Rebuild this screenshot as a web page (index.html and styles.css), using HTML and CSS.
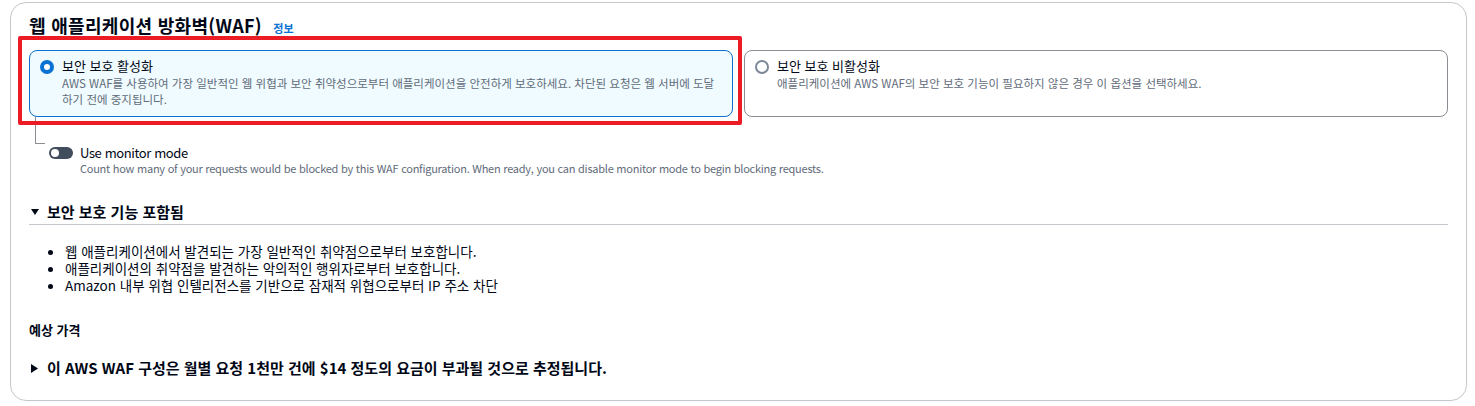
FILE: index.html
```html
<!DOCTYPE html>
<html lang="ko">
<head>
    <meta charset="UTF-8">
    <meta name="viewport" content="width=device-width, initial-scale=1.0">
    <title>웹 애플리케이션 방화벽(WAF)</title>
    <link rel="stylesheet" href="styles.css">
</head>
<body>

<div class="panel">
    <h2 class="panel-title">웹 애플리케이션 방화벽(WAF) <a class="info-link" href="#">정보</a></h2>

    <!-- Protection choice tiles -->
    <div class="tiles">
        <div class="tile selected">
            <span class="radio checked"></span>
            <div>
                <div class="tile-label">보안 보호 활성화</div>
                <div class="tile-desc">AWS WAF를 사용하여 가장 일반적인 웹 위협과 보안 취약성으로부터 애플리케이션을 안전하게 보호하세요. 차단된 요청은 웹 서버에 도달하기 전에 중지됩니다.</div>
            </div>
        </div>
        <div class="tile">
            <span class="radio"></span>
            <div>
                <div class="tile-label">보안 보호 비활성화</div>
                <div class="tile-desc">애플리케이션에 AWS WAF의 보안 보호 기능이 필요하지 않은 경우 이 옵션을 선택하세요.</div>
            </div>
        </div>
    </div>

    <!-- Monitor mode toggle -->
    <div class="branch"></div>
    <div class="monitor">
        <span class="toggle"><span class="knob"></span></span>
        <div>
            <div class="monitor-label">Use monitor mode</div>
            <div class="monitor-desc">Count how many of your requests would be blocked by this WAF configuration. When ready, you can disable monitor mode to begin blocking requests.</div>
        </div>
    </div>

    <!-- Included protections -->
    <div class="expander">
        <svg class="caret" width="8" height="6" viewBox="0 0 8 6"><path d="M0 0H8L4 6Z" fill="#000716"/></svg>
        보안 보호 기능 포함됨
    </div>
    <ul class="features">
        <li>웹 애플리케이션에서 발견되는 가장 일반적인 취약점으로부터 보호합니다.</li>
        <li>애플리케이션의 취약점을 발견하는 악의적인 행위자로부터 보호합니다.</li>
        <li>Amazon 내부 위협 인텔리전스를 기반으로 잠재적 위협으로부터 IP 주소 차단</li>
    </ul>

    <div class="price-label">예상 가격</div>
    <div class="price">
        <svg class="caret" width="7" height="9" viewBox="0 0 7 9"><path d="M0 0L7 4.5L0 9Z" fill="#000716"/></svg>
        이 AWS WAF 구성은 월별 요청 1천만 건에 $14 정도의 요금이 부과될 것으로 추정됩니다.
    </div>
</div>

</body>
</html>
```

FILE: styles.css
```css
body {
    margin: 2px 8px 0 10px;
    font-family: "Noto Sans CJK KR", sans-serif;
    color: #000716;
    background-color: #ffffff;
}
.panel {
    height: 399px;
    box-sizing: border-box;
    border: 1px solid #c6c6cd;
    border-radius: 16px;
    padding: 11px 18px 0;
}
.panel-title {
    height: 22px;
    margin: 0;
    font-size: 18px;
    font-weight: 700;
    letter-spacing: 0.3px;
    line-height: 22px;
}
.info-link {
    font-size: 11px;
    font-weight: 700;
    letter-spacing: 0;
    line-height: 1;
    color: #0972d3;
    text-decoration: none;
    margin-left: 6px;
}
.tiles {
    display: grid;
    grid-template-columns: 1fr 1fr;
    gap: 11px;
    margin-top: 14px;
}
.tile {
    display: flex;
    gap: 8px;
    border: 1px solid #8c8c94;
    border-radius: 8px;
    padding: 6px 10px 9px;
}
.tile.selected {
    position: relative;
    border-color: #0972d3;
    background-color: #f0fbff;
}
/* red highlight drawn over the selected tile */
.tile.selected::after {
    content: "";
    position: absolute;
    top: -15px;
    left: -12px;
    right: -10px;
    bottom: -9px;
    border: 4px solid #ec1c24;
    border-radius: 2px;
}
.radio {
    flex: none;
    width: 14px;
    height: 14px;
    box-sizing: border-box;
    margin-top: 3px;
    border: 2px solid #7d8998;
    border-radius: 50%;
    background-color: #ffffff;
}
.radio.checked {
    border: 4px solid #0972d3;
}
.tile-label {
    font-size: 13px;
    line-height: 18px;
}
.tile-desc {
    font-size: 11.5px;
    line-height: 16px;
    color: #5f6b7a;
}
.branch {
    width: 9px;
    height: 26px;
    margin-left: 6px;
    border-left: 1px solid #8c8c94;
    border-bottom: 1px solid #8c8c94;
}
.monitor {
    display: flex;
    gap: 7px;
    margin-left: 20px;
}
.toggle {
    flex: none;
    position: relative;
    width: 24px;
    height: 12px;
    margin-top: 3px;
    border-radius: 6px;
    background-color: #414d5c;
}
.knob {
    position: absolute;
    top: 2px;
    left: 2px;
    width: 8px;
    height: 8px;
    border-radius: 50%;
    background-color: #ffffff;
}
.monitor-label {
    font-size: 13px;
    letter-spacing: -0.4px;
    line-height: 18px;
}
.monitor-desc {
    font-size: 11px;
    letter-spacing: -0.25px;
    line-height: 13px;
    color: #5f6b7a;
}
.expander {
    display: flex;
    align-items: center;
    gap: 8px;
    margin-top: 27px;
    padding: 0 0 2px 2px;
    border-bottom: 1px solid #c6c6cd;
    font-size: 15px;
    font-weight: 700;
    line-height: 20px;
}
.features {
    margin: 18px 0 0;
    padding-left: 36px;
    font-size: 13.5px;
    line-height: 17px;
}
.price-label {
    margin-top: 27px;
    font-size: 13px;
    font-weight: 700;
    line-height: 18px;
}
.price {
    display: flex;
    align-items: center;
    gap: 9px;
    margin-top: 19px;
    padding-left: 2px;
    font-size: 15px;
    font-weight: 700;
    line-height: 20px;
}
```
